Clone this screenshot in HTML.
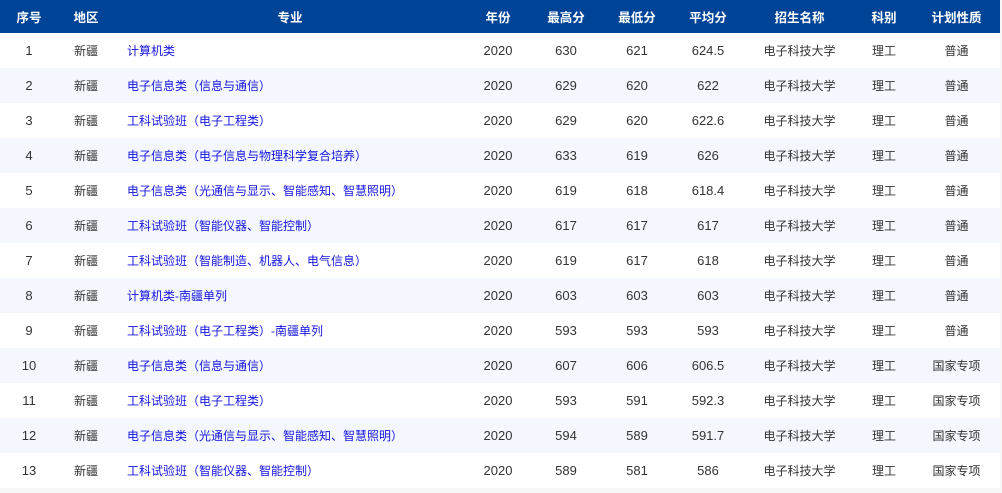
<!DOCTYPE html><html><head><meta charset="utf-8"><style>
body{margin:0;background:#f7f7f7;width:1002px;height:493px;overflow:hidden;font-family:"Liberation Sans","Noto Sans CJK SC",sans-serif;font-size:12px;color:#333}
table{border-collapse:collapse;width:1000px;table-layout:fixed;background:#fff}
th{background:#004498;color:#fff;font-weight:bold;height:33px;padding:0;font-size:12.5px}
td{height:35px;padding:0;text-align:center}
td.n{font-size:13px}
tr:nth-child(odd) td{background:#f4f7fd}
td.m{text-align:left;padding-left:13px;color:#1515e0}
</style></head><body><table>
<colgroup><col style="width:58px"><col style="width:56px"><col style="width:352px"><col style="width:64px"><col style="width:72px"><col style="width:70px"><col style="width:72px"><col style="width:111px"><col style="width:58px"><col style="width:87px"></colgroup>
<tr><th>序号</th><th>地区</th><th>专业</th><th>年份</th><th>最高分</th><th>最低分</th><th>平均分</th><th>招生名称</th><th>科别</th><th>计划性质</th></tr>
<tr><td class="n">1</td><td>新疆</td><td class="m">计算机类</td><td class="n">2020</td><td class="n">630</td><td class="n">621</td><td class="n">624.5</td><td>电子科技大学</td><td>理工</td><td>普通</td></tr>
<tr><td class="n">2</td><td>新疆</td><td class="m">电子信息类（信息与通信）</td><td class="n">2020</td><td class="n">629</td><td class="n">620</td><td class="n">622</td><td>电子科技大学</td><td>理工</td><td>普通</td></tr>
<tr><td class="n">3</td><td>新疆</td><td class="m">工科试验班（电子工程类）</td><td class="n">2020</td><td class="n">629</td><td class="n">620</td><td class="n">622.6</td><td>电子科技大学</td><td>理工</td><td>普通</td></tr>
<tr><td class="n">4</td><td>新疆</td><td class="m">电子信息类（电子信息与物理科学复合培养）</td><td class="n">2020</td><td class="n">633</td><td class="n">619</td><td class="n">626</td><td>电子科技大学</td><td>理工</td><td>普通</td></tr>
<tr><td class="n">5</td><td>新疆</td><td class="m">电子信息类（光通信与显示、智能感知、智慧照明）</td><td class="n">2020</td><td class="n">619</td><td class="n">618</td><td class="n">618.4</td><td>电子科技大学</td><td>理工</td><td>普通</td></tr>
<tr><td class="n">6</td><td>新疆</td><td class="m">工科试验班（智能仪器、智能控制）</td><td class="n">2020</td><td class="n">617</td><td class="n">617</td><td class="n">617</td><td>电子科技大学</td><td>理工</td><td>普通</td></tr>
<tr><td class="n">7</td><td>新疆</td><td class="m">工科试验班（智能制造、机器人、电气信息）</td><td class="n">2020</td><td class="n">619</td><td class="n">617</td><td class="n">618</td><td>电子科技大学</td><td>理工</td><td>普通</td></tr>
<tr><td class="n">8</td><td>新疆</td><td class="m">计算机类-南疆单列</td><td class="n">2020</td><td class="n">603</td><td class="n">603</td><td class="n">603</td><td>电子科技大学</td><td>理工</td><td>普通</td></tr>
<tr><td class="n">9</td><td>新疆</td><td class="m">工科试验班（电子工程类）-南疆单列</td><td class="n">2020</td><td class="n">593</td><td class="n">593</td><td class="n">593</td><td>电子科技大学</td><td>理工</td><td>普通</td></tr>
<tr><td class="n">10</td><td>新疆</td><td class="m">电子信息类（信息与通信）</td><td class="n">2020</td><td class="n">607</td><td class="n">606</td><td class="n">606.5</td><td>电子科技大学</td><td>理工</td><td>国家专项</td></tr>
<tr><td class="n">11</td><td>新疆</td><td class="m">工科试验班（电子工程类）</td><td class="n">2020</td><td class="n">593</td><td class="n">591</td><td class="n">592.3</td><td>电子科技大学</td><td>理工</td><td>国家专项</td></tr>
<tr><td class="n">12</td><td>新疆</td><td class="m">电子信息类（光通信与显示、智能感知、智慧照明）</td><td class="n">2020</td><td class="n">594</td><td class="n">589</td><td class="n">591.7</td><td>电子科技大学</td><td>理工</td><td>国家专项</td></tr>
<tr><td class="n">13</td><td>新疆</td><td class="m">工科试验班（智能仪器、智能控制）</td><td class="n">2020</td><td class="n">589</td><td class="n">581</td><td class="n">586</td><td>电子科技大学</td><td>理工</td><td>国家专项</td></tr>
</table></body></html>
